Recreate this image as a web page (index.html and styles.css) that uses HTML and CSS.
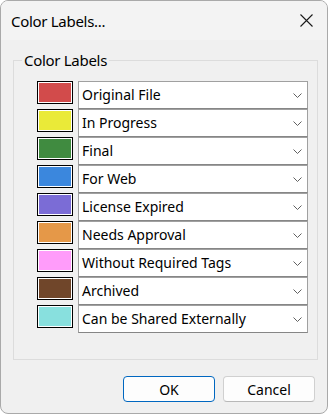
FILE: index.html
```html
<!DOCTYPE html>
<html lang="en">
<head>
    <meta charset="UTF-8">
    <title>Color Labels...</title>
    <link rel="stylesheet" href="styles.css">
</head>
<body>
    <div class="window">
        <div class="titlebar">
            <span class="title">Color Labels...</span>
            <span class="close">
                <svg width="13" height="13" viewBox="0 0 13 13"><path d="M0.5 0.5 L12.5 12.5 M12.5 0.5 L0.5 12.5" stroke="#1a1a1a" stroke-width="1.1" fill="none"/></svg>
            </span>
        </div>
        <div class="content">
            <fieldset class="group">
                <legend>Color Labels</legend>
                <div class="rows">
                    <div class="row"><span class="swatch red"></span><div class="dropdown"><span>Original File</span><svg class="chev" width="9" height="5" viewBox="0 0 9 5"><path d="M0.5 0.5 L4.5 4.5 L8.5 0.5" stroke="#606060" fill="none"/></svg></div></div>
                    <div class="row"><span class="swatch yellow"></span><div class="dropdown"><span>In Progress</span><svg class="chev" width="9" height="5" viewBox="0 0 9 5"><path d="M0.5 0.5 L4.5 4.5 L8.5 0.5" stroke="#606060" fill="none"/></svg></div></div>
                    <div class="row"><span class="swatch green"></span><div class="dropdown"><span>Final</span><svg class="chev" width="9" height="5" viewBox="0 0 9 5"><path d="M0.5 0.5 L4.5 4.5 L8.5 0.5" stroke="#606060" fill="none"/></svg></div></div>
                    <div class="row"><span class="swatch blue"></span><div class="dropdown"><span>For Web</span><svg class="chev" width="9" height="5" viewBox="0 0 9 5"><path d="M0.5 0.5 L4.5 4.5 L8.5 0.5" stroke="#606060" fill="none"/></svg></div></div>
                    <div class="row"><span class="swatch purple"></span><div class="dropdown"><span>License Expired</span><svg class="chev" width="9" height="5" viewBox="0 0 9 5"><path d="M0.5 0.5 L4.5 4.5 L8.5 0.5" stroke="#606060" fill="none"/></svg></div></div>
                    <div class="row"><span class="swatch orange"></span><div class="dropdown"><span>Needs Approval</span><svg class="chev" width="9" height="5" viewBox="0 0 9 5"><path d="M0.5 0.5 L4.5 4.5 L8.5 0.5" stroke="#606060" fill="none"/></svg></div></div>
                    <div class="row"><span class="swatch pink"></span><div class="dropdown"><span>Without Required Tags</span><svg class="chev" width="9" height="5" viewBox="0 0 9 5"><path d="M0.5 0.5 L4.5 4.5 L8.5 0.5" stroke="#606060" fill="none"/></svg></div></div>
                    <div class="row"><span class="swatch brown"></span><div class="dropdown"><span>Archived</span><svg class="chev" width="9" height="5" viewBox="0 0 9 5"><path d="M0.5 0.5 L4.5 4.5 L8.5 0.5" stroke="#606060" fill="none"/></svg></div></div>
                    <div class="row"><span class="swatch cyan"></span><div class="dropdown"><span>Can be Shared Externally</span><svg class="chev" width="9" height="5" viewBox="0 0 9 5"><path d="M0.5 0.5 L4.5 4.5 L8.5 0.5" stroke="#606060" fill="none"/></svg></div></div>
                </div>
            </fieldset>
            <div class="buttons">
                <button class="btn primary">OK</button>
                <button class="btn">Cancel</button>
            </div>
        </div>
    </div>
</body>
</html>
```

FILE: styles.css
```css
body, html {
    margin: 0;
    padding: 0;
    background: #ffffff;
    font-family: 'Noto Sans', sans-serif;
    font-size: 14px;
    color: #000;
}

.window {
    box-sizing: border-box;
    width: 328px;
    height: 414px;
    border: 1px solid #a9a9a9;
    border-radius: 8px;
    overflow: hidden;
    background: #f0f0f0;
    display: flex;
    flex-direction: column;
}

.titlebar {
    height: 39px;
    flex-shrink: 0;
    display: flex;
    align-items: center;
    justify-content: space-between;
    padding: 0 14px 0 10px;
    background: #f3f3f3;
}

.title {
    font-size: 15px;
    line-height: 20px;
    letter-spacing: -0.3px;
}

.close svg {
    display: block;
}

.content {
    flex: 1;
    padding: 10px 0 0 0;
}

.group {
    margin: 0 9px 0 12px;
    padding: 0 9px 26px 23px;
    border: 1px solid #dcdcdc;
}

.group legend {
    margin-left: -15px;
    padding: 0 2px;
    font-size: 15px;
    letter-spacing: -0.3px;
    height: 20px;
    line-height: 20px;
}

.rows {
    padding-top: 11px;
}

.row {
    display: flex;
    gap: 5px;
    height: 28px;
}

.swatch {
    box-sizing: border-box;
    width: 36px;
    height: 23px;
    border: 1px solid #000;
    box-shadow: inset 0 0 0 1px #fff;
}

.red { background: #d24b4b; }
.yellow { background: #eaea38; }
.green { background: #408b40; }
.blue { background: #3b87dd; }
.purple { background: #7b6cd6; }
.orange { background: #e59848; }
.pink { background: #ff9cfa; }
.brown { background: #70462a; }
.cyan { background: #88e0de; }

.dropdown {
    box-sizing: border-box;
    flex: 1;
    height: 28px;
    background: #fff;
    border: 1px solid #a0a0a0;
    border-bottom-color: #868686;
    display: flex;
    align-items: center;
    justify-content: space-between;
    padding: 0 5px 0 3px;
    line-height: 20px;
}

.buttons {
    display: flex;
    justify-content: flex-end;
    gap: 8px;
    padding: 16px 12px 0 0;
}

.btn {
    box-sizing: border-box;
    width: 92px;
    height: 26px;
    font-family: 'Noto Sans', sans-serif;
    font-size: 14px;
    color: #000;
    background: #fdfdfd;
    border: 1px solid #d0d0d0;
    border-bottom-color: #b8b8b8;
    border-radius: 4px;
    padding: 0;
}

.btn.primary {
    border: 1px solid #0067c0;
}
```
